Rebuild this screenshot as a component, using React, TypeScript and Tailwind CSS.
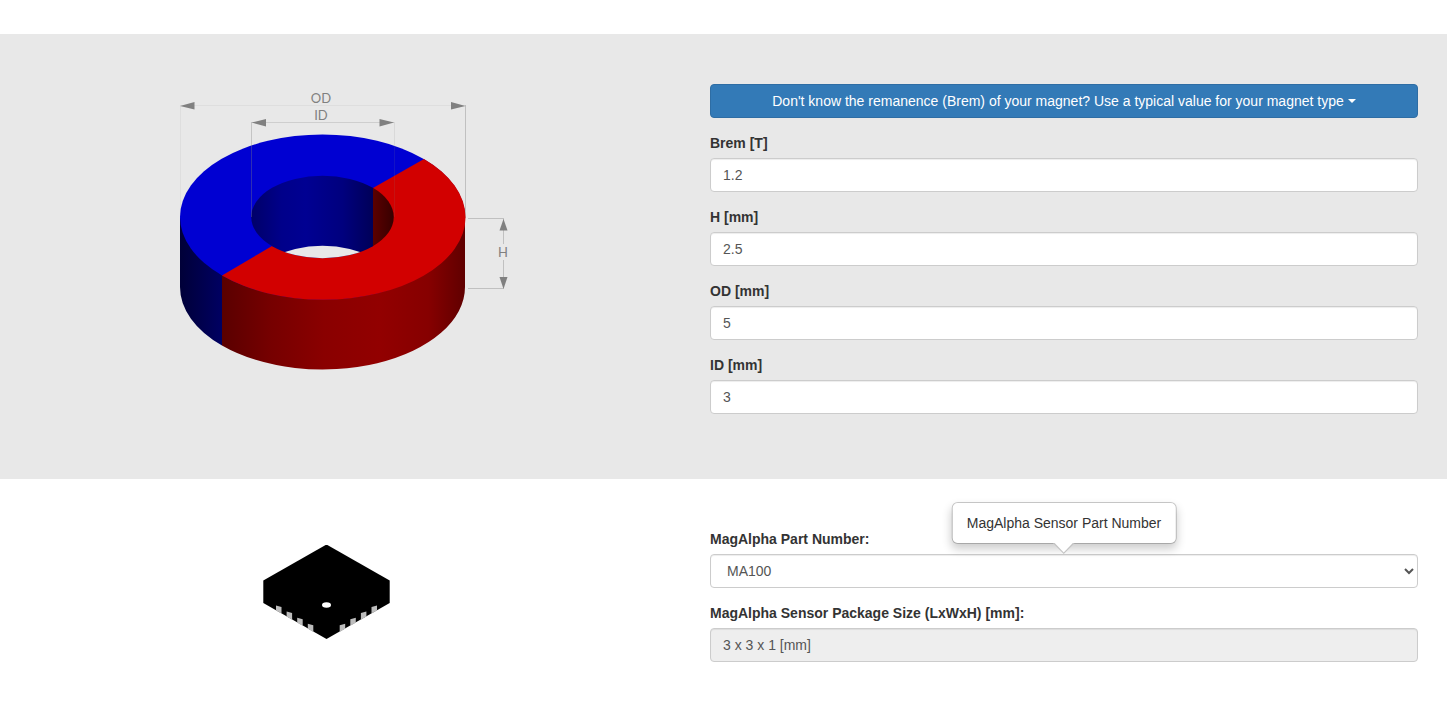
import { useState } from "react";

type MagnetField = "brem" | "h" | "od" | "id";

const fields: { name: MagnetField; label: string }[] = [
  { name: "brem", label: "Brem [T]" },
  { name: "h", label: "H [mm]" },
  { name: "od", label: "OD [mm]" },
  { name: "id", label: "ID [mm]" },
];

const parts = ["MA100", "MA102", "MA300", "MA302", "MA700", "MA710"];

const labelClass = "mb-[5px] block font-bold";
const controlClass =
  "block h-[34px] w-full rounded border border-[#ccc] px-3 text-[#555] shadow-[inset_0_1px_1px_rgba(0,0,0,0.075)] outline-none focus:border-[#66afe9]";

function MagnetDrawing() {
  return (
    <svg
      className="h-auto w-full max-w-[380px]"
      viewBox="0 0 380 290"
      role="img"
      aria-label="Ring magnet dimensions"
    >
      <defs>
        <linearGradient id="blueSide" gradientUnits="userSpaceOnUse" x1="44" y1="0" x2="86" y2="0">
          <stop offset="0" stopColor="#000038" />
          <stop offset="1" stopColor="#000062" />
        </linearGradient>
        <linearGradient id="redSide" gradientUnits="userSpaceOnUse" x1="86" y1="0" x2="329" y2="0">
          <stop offset="0" stopColor="#5a0000" />
          <stop offset="0.2" stopColor="#760000" />
          <stop offset="0.42" stopColor="#8a0000" />
          <stop offset="0.65" stopColor="#920000" />
          <stop offset="0.85" stopColor="#860000" />
          <stop offset="1" stopColor="#600000" />
        </linearGradient>
        <linearGradient id="blueHole" gradientUnits="userSpaceOnUse" x1="115" y1="0" x2="237" y2="0">
          <stop offset="0" stopColor="#000068" />
          <stop offset="0.25" stopColor="#00008a" />
          <stop offset="0.45" stopColor="#000092" />
          <stop offset="0.75" stopColor="#00007e" />
          <stop offset="1" stopColor="#000058" />
        </linearGradient>
        <linearGradient id="redHole" gradientUnits="userSpaceOnUse" x1="237" y1="0" x2="258" y2="0">
          <stop offset="0" stopColor="#5c0000" />
          <stop offset="1" stopColor="#360000" />
        </linearGradient>
        <clipPath id="hole">
          <ellipse cx="186.5" cy="133" rx="71.25" ry="41.25" />
        </clipPath>
      </defs>

      {/* OD and H lines */}
      <g fill="none" strokeWidth="1">
        <path d="M44.5 21V133M45 21.5H329" stroke="#dedede" />
        <path d="M329.5 21V134M332 134.5H368M332 204.5H368M367.5 134V160M367.5 176V204" stroke="#c0c0c0" />
      </g>

      {/* outer wall */}
      <path d="M44 133V203A142.5 82.5 0 0 0 86 261.5V191Z" fill="url(#blueSide)" />
      <path d="M86 191V261.5A142.5 82.5 0 0 0 329 203V133Z" fill="url(#redSide)" />

      {/* top face */}
      <ellipse cx="186.5" cy="133" rx="142.5" ry="82.5" fill="#0000d2" />
      <path d="M288 75A142.5 82.5 0 0 1 86 191.5L136 162L237 104Z" fill="#d20000" />

      {/* hole */}
      <g clipPath="url(#hole)">
        <rect x="115" y="90" width="122" height="86" fill="url(#blueHole)" />
        <rect x="237" y="90" width="22" height="86" fill="url(#redHole)" />
        <ellipse cx="186.5" cy="203" rx="71.25" ry="41.25" fill="#e8e8e8" />
      </g>

      {/* ID lines run over the top face */}
      <g fill="none" strokeWidth="1" stroke="#808080">
        <path d="M116 38.5H258" strokeOpacity="0.25" />
        <path d="M115.5 38V133" strokeOpacity="0.35" />
        <path d="M258.5 38V133" strokeOpacity="0.14" />
      </g>
      <g fill="#808080">
        <path d="M44 22L58.5 18V25.5Z" />
        <path d="M329.5 22L315 18V25.5Z" />
        <path d="M115.5 38.5L130 35V42.5Z" />
        <path d="M258 38.5L243.5 35V42.5Z" />
        <path d="M367.5 135L363.5 146.5H371.5Z" />
        <path d="M367.5 205L363.5 193H371.5Z" />
      </g>
      <g className="font-[Lato,sans-serif] text-[13px]" fill="#808080" textAnchor="middle">
        <text x="185" y="19">OD</text>
        <text x="185" y="36">ID</text>
        <text x="367" y="173">H</text>
      </g>
    </svg>
  );
}

function ChipDrawing() {
  const pins = [0, 1, 2, 3];
  return (
    <svg className="h-24 w-32" viewBox="0 0 128 96" role="img" aria-label="Sensor package">
      <path d="M64.5 -0.5L127.7 35.5V58L64.5 94L1.3 58V35.5Z" fill="#000" />
      <ellipse cx="64.5" cy="60" rx="4.5" ry="2.7" fill="#fff" />
      {pins.map((i) => (
        <g key={i} fill="#bdbdbd" transform={`translate(0 ${i * 6.1})`}>
          <path transform={`translate(${i * 10.6} 0)`} d="M14 60.5L19.5 62V68.6L14 65.5Z" />
          <path transform={`translate(${i * -10.6} 0)`} d="M115 60.5L109.5 62V68.6L115 65.5Z" />
        </g>
      ))}
    </svg>
  );
}

export default function App() {
  const [magnet, setMagnet] = useState<Record<MagnetField, string>>({
    brem: "1.2",
    h: "2.5",
    od: "5",
    id: "3",
  });
  const [part, setPart] = useState("MA100");

  return (
    <main className="bg-white pt-[34px] font-['Liberation_Sans',Arial,sans-serif] text-sm leading-5 text-[#333]">
      <section className="grid grid-cols-1 gap-x-0.5 bg-[#e8e8e8] py-[50px] pr-[29px] md:grid-cols-2">
        <div className="flex items-start justify-center pr-14">
          <MagnetDrawing />
        </div>
        <form>
          <button
            type="button"
            className="mb-[15px] flex min-h-[34px] w-full items-center justify-center gap-1 rounded border border-[#2e6da4] bg-[#337ab7] px-3 text-white hover:bg-[#286090]"
          >
            Don't know the remanence (Brem) of your magnet? Use a typical value for your magnet type
            <span className="border-x-4 border-t-4 border-x-transparent border-t-white" />
          </button>
          {fields.map((field) => (
            <div key={field.name} className="mb-[15px]">
              <label htmlFor={field.name} className={labelClass}>
                {field.label}
              </label>
              <input
                id={field.name}
                type="text"
                inputMode="decimal"
                className={`${controlClass} bg-white`}
                value={magnet[field.name]}
                onChange={(event) => setMagnet({ ...magnet, [field.name]: event.target.value })}
              />
            </div>
          ))}
        </form>
      </section>

      <section className="grid grid-cols-1 gap-x-0.5 py-[50px] pr-[29px] md:grid-cols-2">
        <div className="flex items-start justify-center pt-4 pr-14">
          <ChipDrawing />
        </div>
        <form>
          <div className="mb-[15px]">
            <label htmlFor="part" className={labelClass}>
              MagAlpha Part Number:
            </label>
            <div className="relative">
              <select
                id="part"
                className={`${controlClass} bg-white`}
                aria-describedby="part-tip"
                value={part}
                onChange={(event) => setPart(event.target.value)}
              >
                {parts.map((name) => (
                  <option key={name}>{name}</option>
                ))}
              </select>
              <div
                id="part-tip"
                role="tooltip"
                className="absolute bottom-full left-1/2 mb-2.5 -translate-x-1/2 rounded-md border border-black/20 bg-white bg-clip-padding px-3.5 py-2.5 whitespace-nowrap shadow-[0_5px_10px_rgba(0,0,0,0.2)]"
              >
                MagAlpha Sensor Part Number
                <svg className="absolute top-full left-1/2 -translate-x-1/2" width="22" height="11" viewBox="0 0 22 11">
                  <path d="M0 0L11 11L22 0Z" fill="#c4c4c4" />
                  <path d="M1 -1L11 9.5L21 -1Z" fill="#fff" />
                </svg>
              </div>
            </div>
          </div>
          <div className="mb-[15px]">
            <label htmlFor="size" className={labelClass}>
              MagAlpha Sensor Package Size (LxWxH) [mm]:
            </label>
            <input id="size" type="text" readOnly className={`${controlClass} bg-[#eee]`} value="3 x 3 x 1 [mm]" />
          </div>
        </form>
      </section>
    </main>
  );
}
